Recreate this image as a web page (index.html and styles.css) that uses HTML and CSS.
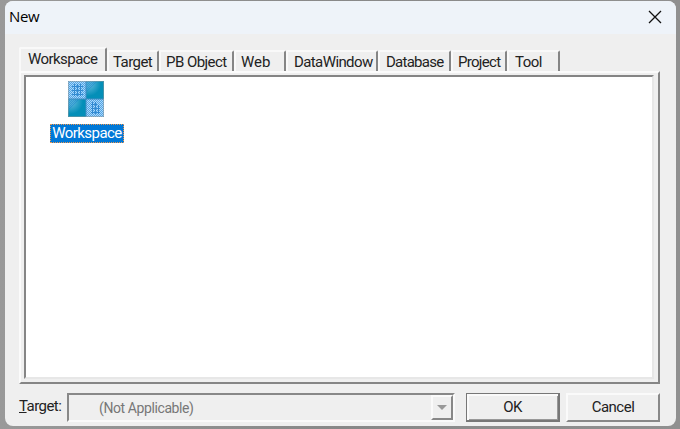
FILE: index.html
```html
<!DOCTYPE html>
<html lang="en">
<head>
  <meta charset="UTF-8" />
  <title>New</title>
  <link rel="stylesheet" href="styles.css">
</head>
<body>
  <div class="dialog">
    <header class="titlebar">
      <span class="title">New</span>
      <svg class="close" width="14" height="14" viewBox="0 0 14 14">
        <path d="M1 1L13 13M13 1L1 13" stroke="#111" stroke-width="1.3" fill="none"/>
      </svg>
    </header>

    <nav class="tabs">
      <div class="tab active"><span>Workspace</span></div>
      <div class="tab target"><span>Target</span></div>
      <div class="tab object"><span>PB Object</span></div>
      <div class="tab web"><span>Web</span></div>
      <div class="tab datawindow"><span>DataWindow</span></div>
      <div class="tab database"><span>Database</span></div>
      <div class="tab project"><span>Project</span></div>
      <div class="tab tool"><span>Tool</span></div>
    </nav>

    <main class="panel">
      <div class="list">
        <div class="item">
          <svg class="item-icon" width="36" height="36" viewBox="0 0 36 36">
            <defs>
              <radialGradient id="teal" cx="0.15" cy="0.15" r="0.85">
                <stop offset="0.2" stop-color="#4fb0d6"/>
                <stop offset="0.8" stop-color="#048fb8"/>
              </radialGradient>
              <pattern id="dither" width="2" height="2" patternUnits="userSpaceOnUse">
                <rect width="1" height="1" fill="#1a7fd0"/>
                <rect x="1" y="1" width="1" height="1" fill="#1a7fd0"/>
              </pattern>
            </defs>
            <rect width="36" height="36" fill="#a8d8fc"/>
            <g fill="none" stroke="#3c8fd2">
              <path d="M6.500 3v12M9.500 3v12M12.500 3v12M4 5.500h11M4 9.500h11M4 13.500h11"/>
              <path d="M24.500 21v12M27.500 21v12M30.500 24v9M23 23.500h6M23 27.500h9M23 31.500h9"/>
            </g>
            <rect width="36" height="36" fill="url(#dither)" opacity="0.6"/>
            <rect x="18" width="18" height="18" fill="url(#teal)"/>
            <rect y="18" width="18" height="18" fill="url(#teal)"/>
            <path d="M18 0h12L18 12zM0 18h12L0 30z" fill="url(#dither)" opacity="0.5"/>
            <path d="M0 18h36M18 0v36" stroke="#408bc2" stroke-width="1"/>
            <rect x="0.500" y="0.500" width="35" height="35" fill="none" stroke="#8d969a" stroke-dasharray="1 1"/>
          </svg>
          <span class="item-label"><span>Workspace</span></span>
        </div>
      </div>
    </main>

    <footer class="footer">
      <label class="target-label"><u>T</u>arget:</label>
      <div class="combo">
        <span class="combo-text">(Not Applicable)</span>
        <span class="combo-button">
          <svg width="10" height="6" viewBox="0 0 10 6"><path d="M0 0h10L5 5z" fill="#999"/></svg>
        </span>
      </div>
      <button class="button ok">OK</button>
      <button class="button cancel">Cancel</button>
    </footer>
  </div>
</body>
</html>
```

FILE: styles.css
```css
* {
  box-sizing: border-box;
}
body {
  margin: 0;
  height: 429px;
  padding: 1px 4px 3px 5px;
  overflow: hidden;
  background: linear-gradient(90deg, #999, #888 50%, #909090);
  font-family: Roboto, "Liberation Sans", sans-serif;
  font-size: 15px;
  line-height: 18px;
  letter-spacing: -0.55px;
  color: #222;
}
.dialog {
  height: 425px;
  display: flex;
  flex-direction: column;
  overflow: hidden;
  border-radius: 8px;
  background: #efefef;
}
.titlebar {
  height: 33px;
  flex: none;
  display: flex;
  justify-content: space-between;
  padding: 5px 14px 0 4px;
  background: #eef3f9;
}
.title {
  font-family: "Open Sans", "Noto Sans", sans-serif;
  font-size: 15px;
  line-height: 20px;
  letter-spacing: -0.4px;
  color: #000;
}
.close {
  margin-top: 4px;
}
.tabs {
  height: 37px;
  flex: none;
  display: flex;
  align-items: flex-end;
  padding-left: 14px;
}
.tab {
  height: 21px;
  padding: 1px 0 0 6px;
  border-top: 2px solid #f9f9f9;
  border-left: 2px solid #f9f9f9;
  border-right: 2px solid #858585;
  border-radius: 2px 2px 0 0;
  white-space: nowrap;
}
.tab.active {
  width: 88px;
  height: 24px;
  padding: 1px 0 0 7px;
}
.tab.target {
  width: 52px;
  padding-left: 4px;
}
.tab.object {
  width: 75px;
  padding-left: 5px;
}
.tab.web {
  width: 52px;
  padding-left: 5px;
  letter-spacing: 0;
}
.tab.datawindow {
  width: 92px;
  letter-spacing: -0.6px;
}
.tab.database {
  width: 73px;
  letter-spacing: -0.75px;
}
.tab.project {
  width: 56px;
  padding-left: 5px;
  letter-spacing: -0.7px;
}
.tab.tool {
  width: 53px;
}
.panel {
  width: 641px;
  height: 313px;
  flex: none;
  margin-left: 14px;
  padding: 2px 4px 3px 3px;
  border: 2px solid;
  border-color: #fbfbfb #858585 #858585 #fbfbfb;
}
.list {
  height: 100%;
  padding: 4px 0 0 24px;
  background: #fff;
  border: 2px solid;
  border-color: #858585 #e7e7e7 #e7e7e7 #858585;
}
.item {
  width: 74px;
  display: flex;
  flex-direction: column;
  align-items: center;
}
.item-icon {
  display: block;
  margin-right: 2px;
}
.item-label {
  width: 74px;
  height: 19px;
  margin-top: 7px;
  border: 1px dotted #ef974e;
  background: #0078d7;
  color: #fff;
  line-height: 17px;
  text-align: center;
}
.footer {
  display: flex;
  align-items: flex-start;
  padding: 9px 0 0 14px;
}
.target-label {
  width: 48px;
  padding-top: 4px;
}
.combo {
  width: 388px;
  height: 29px;
  display: flex;
  justify-content: space-between;
  border: 2px solid;
  border-color: #888 #fafafa #fafafa #888;
  color: #777;
}
.combo-text {
  padding: 4px 0 0 30px;
  font-size: 14px;
  letter-spacing: -0.4px;
}
.combo-button {
  width: 22px;
  height: 25px;
  display: flex;
  align-items: center;
  justify-content: center;
  border: 2px solid;
  border-color: #fafafa #888 #888 #fafafa;
}
.button {
  width: 94px;
  height: 29px;
  margin: 0 0 0 6px;
  padding: 0 0 1px;
  border: 2px solid;
  border-color: #fafafa #888 #888 #fafafa;
  background: #efefef;
  color: #222;
  font-family: inherit;
  font-size: 15px;
  letter-spacing: -0.5px;
}
.ok {
  margin-left: 11px;
  border: 1px solid #777;
  border-right-width: 2px;
  border-bottom-width: 2px;
  box-shadow: inset 2px 2px #fafafa, inset -1px -1px #999;
}
```
